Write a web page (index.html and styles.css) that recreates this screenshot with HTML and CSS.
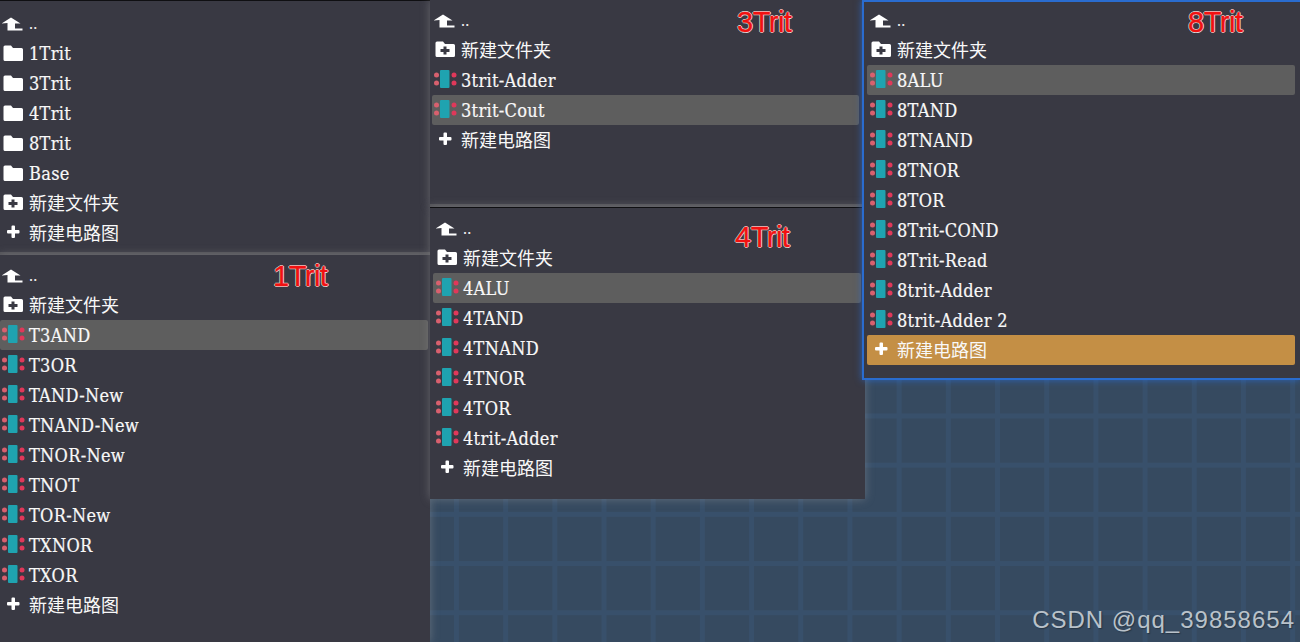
FILE: index.html
```html
<!DOCTYPE html>
<html lang="en">
<head>
  <meta charset="UTF-8" />
  <title>Circuit browser</title>
  <link rel="stylesheet" href="styles.css">
</head>
<body>
<svg class="defs" width="0" height="0">
  <symbol id="i-up" viewBox="0 0 24 24">
    <path d="M-.5 11.500 9 5.500l9.500 6h-5.500v5h7.500v2H5.500v-7.500z" fill="#fff"/>
  </symbol>
  <symbol id="i-folder" viewBox="0 0 24 24">
    <path d="M3 4.500h6l2 2.500h8.500a1.500 1.500 0 0 1 1.500 1.500v10a1.500 1.500 0 0 1-1.500 1.500h-16.500a1.500 1.500 0 0 1-1.500-1.500v-12.500a1.500 1.500 0 0 1 1.500-1.500z" fill="#fff"/>
  </symbol>
  <symbol id="i-newfolder" viewBox="0 0 24 24">
    <path fill-rule="evenodd" d="M3 4.500h6l2 2.500h8.500a1.500 1.500 0 0 1 1.500 1.500v10a1.500 1.500 0 0 1-1.500 1.500h-16.500a1.500 1.500 0 0 1-1.500-1.500v-12.500a1.500 1.500 0 0 1 1.500-1.500zM9.500 9.500v2.500h-3v3h3v2.500h3v-2.500h3v-3h-3v-2.500z" fill="#fff"/>
  </symbol>
  <symbol id="i-plus" viewBox="0 0 24 24">
    <path d="M9.500 6.500a1 1 0 0 1 1-1h1.500a1 1 0 0 1 1 1v3.500h3.500a1 1 0 0 1 1 1v1.500a1 1 0 0 1-1 1h-3.500v3.500a1 1 0 0 1-1 1h-1.500a1 1 0 0 1-1-1v-3.500h-3.500a1 1 0 0 1-1-1v-1.500a1 1 0 0 1 1-1h3.500z" fill="#fff"/>
  </symbol>
  <symbol id="i-chip" viewBox="0 0 24 24">
    <rect x="6" y="2" width="9.500" height="18" rx="1" fill="#1fa3b0"/>
    <circle cx="2.500" cy="7" r="2.500" fill="#d8606e"/>
    <circle cx="2.500" cy="15" r="2.500" fill="#d8606e"/>
    <circle cx="20" cy="7" r="2.500" fill="#e0385a"/>
    <circle cx="20" cy="15" r="2.500" fill="#e0385a"/>
  </symbol>
</svg>

<div class="canvas">

  <div class="panel panel-top">
    <div class="row up"><svg class="icon"><use href="#i-up"/></svg><span>..</span></div>
    <div class="row"><svg class="icon"><use href="#i-folder"/></svg><span>1Trit</span></div>
    <div class="row"><svg class="icon"><use href="#i-folder"/></svg><span>3Trit</span></div>
    <div class="row"><svg class="icon"><use href="#i-folder"/></svg><span>4Trit</span></div>
    <div class="row"><svg class="icon"><use href="#i-folder"/></svg><span>8Trit</span></div>
    <div class="row"><svg class="icon"><use href="#i-folder"/></svg><span>Base</span></div>
    <div class="row cjk"><svg class="icon"><use href="#i-newfolder"/></svg><span>新建文件夹</span></div>
    <div class="row cjk"><svg class="icon"><use href="#i-plus"/></svg><span>新建电路图</span></div>
  </div>

  <div class="panel panel-1trit">
    <div class="row up"><svg class="icon"><use href="#i-up"/></svg><span>..</span></div>
    <div class="row cjk"><svg class="icon"><use href="#i-newfolder"/></svg><span>新建文件夹</span></div>
    <div class="row selected"><svg class="icon"><use href="#i-chip"/></svg><span>T3AND</span></div>
    <div class="row"><svg class="icon"><use href="#i-chip"/></svg><span>T3OR</span></div>
    <div class="row"><svg class="icon"><use href="#i-chip"/></svg><span>TAND-New</span></div>
    <div class="row"><svg class="icon"><use href="#i-chip"/></svg><span>TNAND-New</span></div>
    <div class="row"><svg class="icon"><use href="#i-chip"/></svg><span>TNOR-New</span></div>
    <div class="row"><svg class="icon"><use href="#i-chip"/></svg><span>TNOT</span></div>
    <div class="row"><svg class="icon"><use href="#i-chip"/></svg><span>TOR-New</span></div>
    <div class="row"><svg class="icon"><use href="#i-chip"/></svg><span>TXNOR</span></div>
    <div class="row"><svg class="icon"><use href="#i-chip"/></svg><span>TXOR</span></div>
    <div class="row cjk"><svg class="icon"><use href="#i-plus"/></svg><span>新建电路图</span></div>
    <div class="note note-1">1Trit</div>
  </div>

  <div class="panel panel-3trit">
    <div class="row up"><svg class="icon"><use href="#i-up"/></svg><span>..</span></div>
    <div class="row cjk"><svg class="icon"><use href="#i-newfolder"/></svg><span>新建文件夹</span></div>
    <div class="row"><svg class="icon"><use href="#i-chip"/></svg><span>3trit-Adder</span></div>
    <div class="row selected"><svg class="icon"><use href="#i-chip"/></svg><span>3trit-Cout</span></div>
    <div class="row cjk"><svg class="icon"><use href="#i-plus"/></svg><span>新建电路图</span></div>
    <div class="note note-3">3Trit</div>
  </div>

  <div class="panel panel-4trit">
    <div class="row up"><svg class="icon"><use href="#i-up"/></svg><span>..</span></div>
    <div class="row cjk"><svg class="icon"><use href="#i-newfolder"/></svg><span>新建文件夹</span></div>
    <div class="row selected"><svg class="icon"><use href="#i-chip"/></svg><span>4ALU</span></div>
    <div class="row"><svg class="icon"><use href="#i-chip"/></svg><span>4TAND</span></div>
    <div class="row"><svg class="icon"><use href="#i-chip"/></svg><span>4TNAND</span></div>
    <div class="row"><svg class="icon"><use href="#i-chip"/></svg><span>4TNOR</span></div>
    <div class="row"><svg class="icon"><use href="#i-chip"/></svg><span>4TOR</span></div>
    <div class="row"><svg class="icon"><use href="#i-chip"/></svg><span>4trit-Adder</span></div>
    <div class="row cjk"><svg class="icon"><use href="#i-plus"/></svg><span>新建电路图</span></div>
    <div class="note note-4">4Trit</div>
  </div>

  <div class="panel panel-8trit">
    <div class="row up"><svg class="icon"><use href="#i-up"/></svg><span>..</span></div>
    <div class="row cjk"><svg class="icon"><use href="#i-newfolder"/></svg><span>新建文件夹</span></div>
    <div class="row selected"><svg class="icon"><use href="#i-chip"/></svg><span>8ALU</span></div>
    <div class="row"><svg class="icon"><use href="#i-chip"/></svg><span>8TAND</span></div>
    <div class="row"><svg class="icon"><use href="#i-chip"/></svg><span>8TNAND</span></div>
    <div class="row"><svg class="icon"><use href="#i-chip"/></svg><span>8TNOR</span></div>
    <div class="row"><svg class="icon"><use href="#i-chip"/></svg><span>8TOR</span></div>
    <div class="row"><svg class="icon"><use href="#i-chip"/></svg><span>8Trit-COND</span></div>
    <div class="row"><svg class="icon"><use href="#i-chip"/></svg><span>8Trit-Read</span></div>
    <div class="row"><svg class="icon"><use href="#i-chip"/></svg><span>8trit-Adder</span></div>
    <div class="row"><svg class="icon"><use href="#i-chip"/></svg><span>8trit-Adder 2</span></div>
    <div class="row cjk accent"><svg class="icon"><use href="#i-plus"/></svg><span>新建电路图</span></div>
    <div class="note note-8">8Trit</div>
  </div>

  <div class="watermark">CSDN @qq_39858654</div>
</div>
</body>
</html>
```

FILE: styles.css
```css
html, body {
  margin: 0;
  padding: 0;
  overflow: hidden;
}

.defs { position: absolute; }

/* the circuit grid behind the windows */
.canvas {
  position: relative;
  width: 1300px;
  height: 642px;
  overflow: hidden;
  background-color: #364a60;
  background-image:
    linear-gradient(to right, #38506b 5px, transparent 5px),
    linear-gradient(to bottom, #38506b 5px, transparent 5px);
  background-size: 49.2px 49.2px;
  background-position: 11.3px 20px;
  font-family: "DejaVu Serif", "Noto Sans CJK SC", serif;
  font-stretch: condensed;
  font-size: 18px;
  color: #f8f8f8;
}

.panel {
  position: absolute;
  box-sizing: border-box;
  background-color: #393943;
  box-shadow: 0 0 9px rgba(170, 170, 170, 0.4);
}

.panel-top {
  left: 0;
  top: 0;
  width: 430px;
  height: 255px;
  padding-top: 9px;
  border-top: 1px solid #0f0f12;
  border-bottom: 3px solid #505056;
}
.panel-top .row, .panel-1trit .row { padding-left: 2px; }

.panel-1trit {
  left: 0;
  top: 255px;
  width: 430px;
  height: 387px;
  padding: 7px 2px 0 0;
}

.panel-3trit {
  left: 430px;
  top: 0;
  width: 432px;
  height: 207px;
  padding: 7px 3px 0 2px;
  border-bottom: 3px solid #505056;
}
.panel-3trit .row { padding-left: 2px; }

.panel-4trit {
  left: 430px;
  top: 207px;
  width: 435px;
  height: 292px;
  padding: 7px 4px 0 3px;
  border-top: 1px solid #0f0f12;
}
.panel-4trit .row { padding-left: 3px; }

.panel-8trit {
  left: 862px;
  top: 0;
  width: 438px;
  height: 380px;
  padding: 5px 5px 0 3px;
  border: 2px solid #2a6ccf;
  border-right: none;
  box-shadow: 0 0 7px rgba(42, 108, 207, 0.8);
}
.panel-8trit .row { padding-left: 3px; }

.row {
  display: flex;
  align-items: center;
  gap: 3px;
  height: 30px;
  box-sizing: border-box;
  border-radius: 2px;
  white-space: nowrap;
  letter-spacing: 0.3px;
  -webkit-text-stroke: 0.2px #f8f8f8;
}

/* chinese rows and their icons sit a pixel higher than the latin ones */
.row.cjk {
  padding-bottom: 2px;
  letter-spacing: 0;
  -webkit-text-stroke: 0;
}

.row.up { height: 28px; }
.row.up span { font-size: 14px; }

.row.selected { background-color: #5e5e5e; }
.row.accent { background-color: #c48f45; }

.icon {
  width: 24px;
  height: 24px;
  flex: none;
  overflow: visible;
}

/* hand-written red labels on top of the screenshot */
.note {
  position: absolute;
  font-family: "Liberation Sans", sans-serif;
  font-stretch: normal;
  font-size: 29px;
  letter-spacing: -0.5px;
  color: #f21111;
  text-shadow: 1px 0 #d8d8d8, -1px 0 #d8d8d8, 0 1px #d8d8d8, 0 -1px #d8d8d8;
  -webkit-text-stroke: 0.4px #f21111;
}
.note-1 { left: 273px; top: 5px; }
.note-3 { left: 307px; top: 6px; }
.note-4 { left: 305px; top: 13px; }
.note-8 { left: 324px; top: 4px; }

.watermark {
  position: absolute;
  right: 5px;
  bottom: 8px;
  font-family: "Liberation Sans", sans-serif;
  font-stretch: normal;
  font-size: 24px;
  letter-spacing: 1px;
  color: #b9c2ca;
  text-shadow: 1px 1px 1px rgba(30, 40, 50, 0.6);
}
```
